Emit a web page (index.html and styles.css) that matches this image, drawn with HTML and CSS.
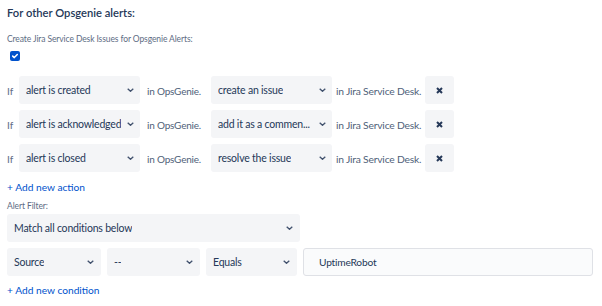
FILE: index.html
```html
<!DOCTYPE html>
<html>
<head>
<meta charset="utf-8">
<link rel="stylesheet" href="styles.css">
</head>
<body>
<div class="page">
  <h2 class="title">For other Opsgenie alerts:</h2>
  <div class="label sub">Create Jira Service Desk Issues for Opsgenie Alerts:</div>
  <div class="check">
    <svg width="10" height="10" viewBox="0 0 10 10"><rect x="0" y="0" width="10" height="10" rx="2" fill="#0052cc"/><path d="M2.7 5.1 L4.3 6.6 L7.3 3.5" fill="none" stroke="#fff" stroke-width="1.5" stroke-linecap="round" stroke-linejoin="round"/></svg>
  </div>

  <div class="actions">
    <div class="row">
      <span class="if">If</span>
      <div class="select w-alert"><span class="val">alert is created</span><svg class="chev" viewBox="0 0 7 4"><path d="M0.7 0.7 L3.5 3.3 L6.3 0.7" fill="none" stroke="#42526e" stroke-width="1.3"/></svg></div>
      <span class="mid">in OpsGenie.</span>
      <div class="select w-act"><span class="val">create an issue</span><svg class="chev" viewBox="0 0 7 4"><path d="M0.7 0.7 L3.5 3.3 L6.3 0.7" fill="none" stroke="#42526e" stroke-width="1.3"/></svg></div>
      <span class="tail">in Jira Service Desk.</span>
      <div class="xbtn"><svg viewBox="0 0 7 7"><path d="M1 1 L6 6 M6 1 L1 6" stroke="#253858" stroke-width="2"/></svg></div>
    </div>
    <div class="row">
      <span class="if">If</span>
      <div class="select w-alert"><span class="val">alert is acknowledged</span><svg class="chev" viewBox="0 0 7 4"><path d="M0.7 0.7 L3.5 3.3 L6.3 0.7" fill="none" stroke="#42526e" stroke-width="1.3"/></svg></div>
      <span class="mid">in OpsGenie.</span>
      <div class="select w-act"><span class="val">add it as a commen...</span><svg class="chev" viewBox="0 0 7 4"><path d="M0.7 0.7 L3.5 3.3 L6.3 0.7" fill="none" stroke="#42526e" stroke-width="1.3"/></svg></div>
      <span class="tail">in Jira Service Desk.</span>
      <div class="xbtn"><svg viewBox="0 0 7 7"><path d="M1 1 L6 6 M6 1 L1 6" stroke="#253858" stroke-width="2"/></svg></div>
    </div>
    <div class="row">
      <span class="if">If</span>
      <div class="select w-alert"><span class="val">alert is closed</span><svg class="chev" viewBox="0 0 7 4"><path d="M0.7 0.7 L3.5 3.3 L6.3 0.7" fill="none" stroke="#42526e" stroke-width="1.3"/></svg></div>
      <span class="mid">in OpsGenie.</span>
      <div class="select w-act"><span class="val">resolve the issue</span><svg class="chev" viewBox="0 0 7 4"><path d="M0.7 0.7 L3.5 3.3 L6.3 0.7" fill="none" stroke="#42526e" stroke-width="1.3"/></svg></div>
      <span class="tail">in Jira Service Desk.</span>
      <div class="xbtn"><svg viewBox="0 0 7 7"><path d="M1 1 L6 6 M6 1 L1 6" stroke="#253858" stroke-width="2"/></svg></div>
    </div>
  </div>

  <a class="link link-action">+ Add new action</a>
  <div class="label filter-label">Alert Filter:</div>
  <div class="select w-match"><span class="val">Match all conditions below</span><svg class="chev" viewBox="0 0 7 4"><path d="M0.7 0.7 L3.5 3.3 L6.3 0.7" fill="none" stroke="#42526e" stroke-width="1.3"/></svg></div>
  <div class="cond">
    <div class="select w-src"><span class="val">Source</span><svg class="chev" viewBox="0 0 7 4"><path d="M0.7 0.7 L3.5 3.3 L6.3 0.7" fill="none" stroke="#42526e" stroke-width="1.3"/></svg></div>
    <div class="select w-dash"><span class="val">--</span><svg class="chev" viewBox="0 0 7 4"><path d="M0.7 0.7 L3.5 3.3 L6.3 0.7" fill="none" stroke="#42526e" stroke-width="1.3"/></svg></div>
    <div class="select w-eq"><span class="val">Equals</span><svg class="chev" viewBox="0 0 7 4"><path d="M0.7 0.7 L3.5 3.3 L6.3 0.7" fill="none" stroke="#42526e" stroke-width="1.3"/></svg></div>
    <div class="input">UptimeRobot</div>
  </div>
  <a class="link link-cond">+ Add new condition</a>
</div>
</body>
</html>
```

FILE: styles.css
```css
* { box-sizing: border-box; }
html, body { margin: 0; padding: 0; background: #fff; }
body {
  font-family: "Lato", "Noto Sans", sans-serif;
  color: #172b4d;
  width: 602px;
  height: 306px;
  overflow: hidden;
}
.page { padding: 4px 7px 0 7px; }
.title {
  margin: 0;
  font-size: 11.2px;
  font-weight: 600;
  line-height: 18px;
  color: #253858;
  white-space: nowrap;
}
.label {
  font-size: 8.5px;
  letter-spacing: -0.1px;
  color: #5e6c84;
  line-height: 14px;
  white-space: nowrap;
}
.sub { margin-top: 10px; }
.check { height: 10px; margin: 5px 0 0 3px; line-height: 0; }
.check svg { display: block; }
.actions {
  margin-top: 15px;
  display: flex;
  flex-direction: column;
  gap: 6px;
}
.row {
  display: flex;
  align-items: center;
  height: 28px;
}
.if { width: 12px; font-size: 10px; color: #5e6c84; padding-top: 2px; }
.select {
  display: flex;
  align-items: center;
  justify-content: space-between;
  background: #f4f5f7;
  border-radius: 3px;
  height: 28px;
  padding: 0 6px 0 7px;
  font-size: 10.5px;
  letter-spacing: -0.2px;
  color: #253858;
  flex: none;
}
.select .val { white-space: nowrap; overflow: hidden; }
.chev { width: 7px; height: 4px; flex: none; }
.w-alert { width: 121px; }
.mid {
  width: 71px;
  padding-left: 7px;
  color: #505f79;
  font-size: 10px;
  letter-spacing: -0.2px;
  white-space: nowrap;
  padding-top: 2px;
}
.w-act { width: 121px; }
.tail {
  width: 93px;
  padding-left: 4px;
  color: #505f79;
  font-size: 10.3px;
  letter-spacing: -0.2px;
  white-space: nowrap;
  padding-top: 1px;
}
.xbtn {
  width: 29px;
  height: 28px;
  background: #f4f5f7;
  border-radius: 3px;
  display: flex;
  align-items: center;
  justify-content: center;
  flex: none;
}
.xbtn svg { width: 7px; height: 7px; }
.link {
  display: block;
  color: #0052cc;
  font-size: 10.2px;
  text-decoration: none;
  line-height: 16px;
  white-space: nowrap;
}
.link-action { margin-top: 7px; }
.filter-label { margin-top: 4px; }
.w-match { width: 293px; margin-top: 1px; padding-right: 7px; }
.cond {
  display: flex;
  gap: 6px;
  margin-top: 6px;
  height: 28px;
}
.cond .select { padding-right: 7px; }
.w-src { width: 94px; }
.w-dash { width: 93px; }
.w-eq { width: 91px; }
.input {
  width: 290px;
  height: 28px;
  border: 1px solid #dfe1e6;
  background: #fafbfc;
  border-radius: 3px;
  display: flex;
  align-items: center;
  padding-left: 15px;
  font-size: 10.2px;
  letter-spacing: -0.2px;
  color: #253858;
  flex: none;
}
.link-cond { margin-top: 6px; }
```
